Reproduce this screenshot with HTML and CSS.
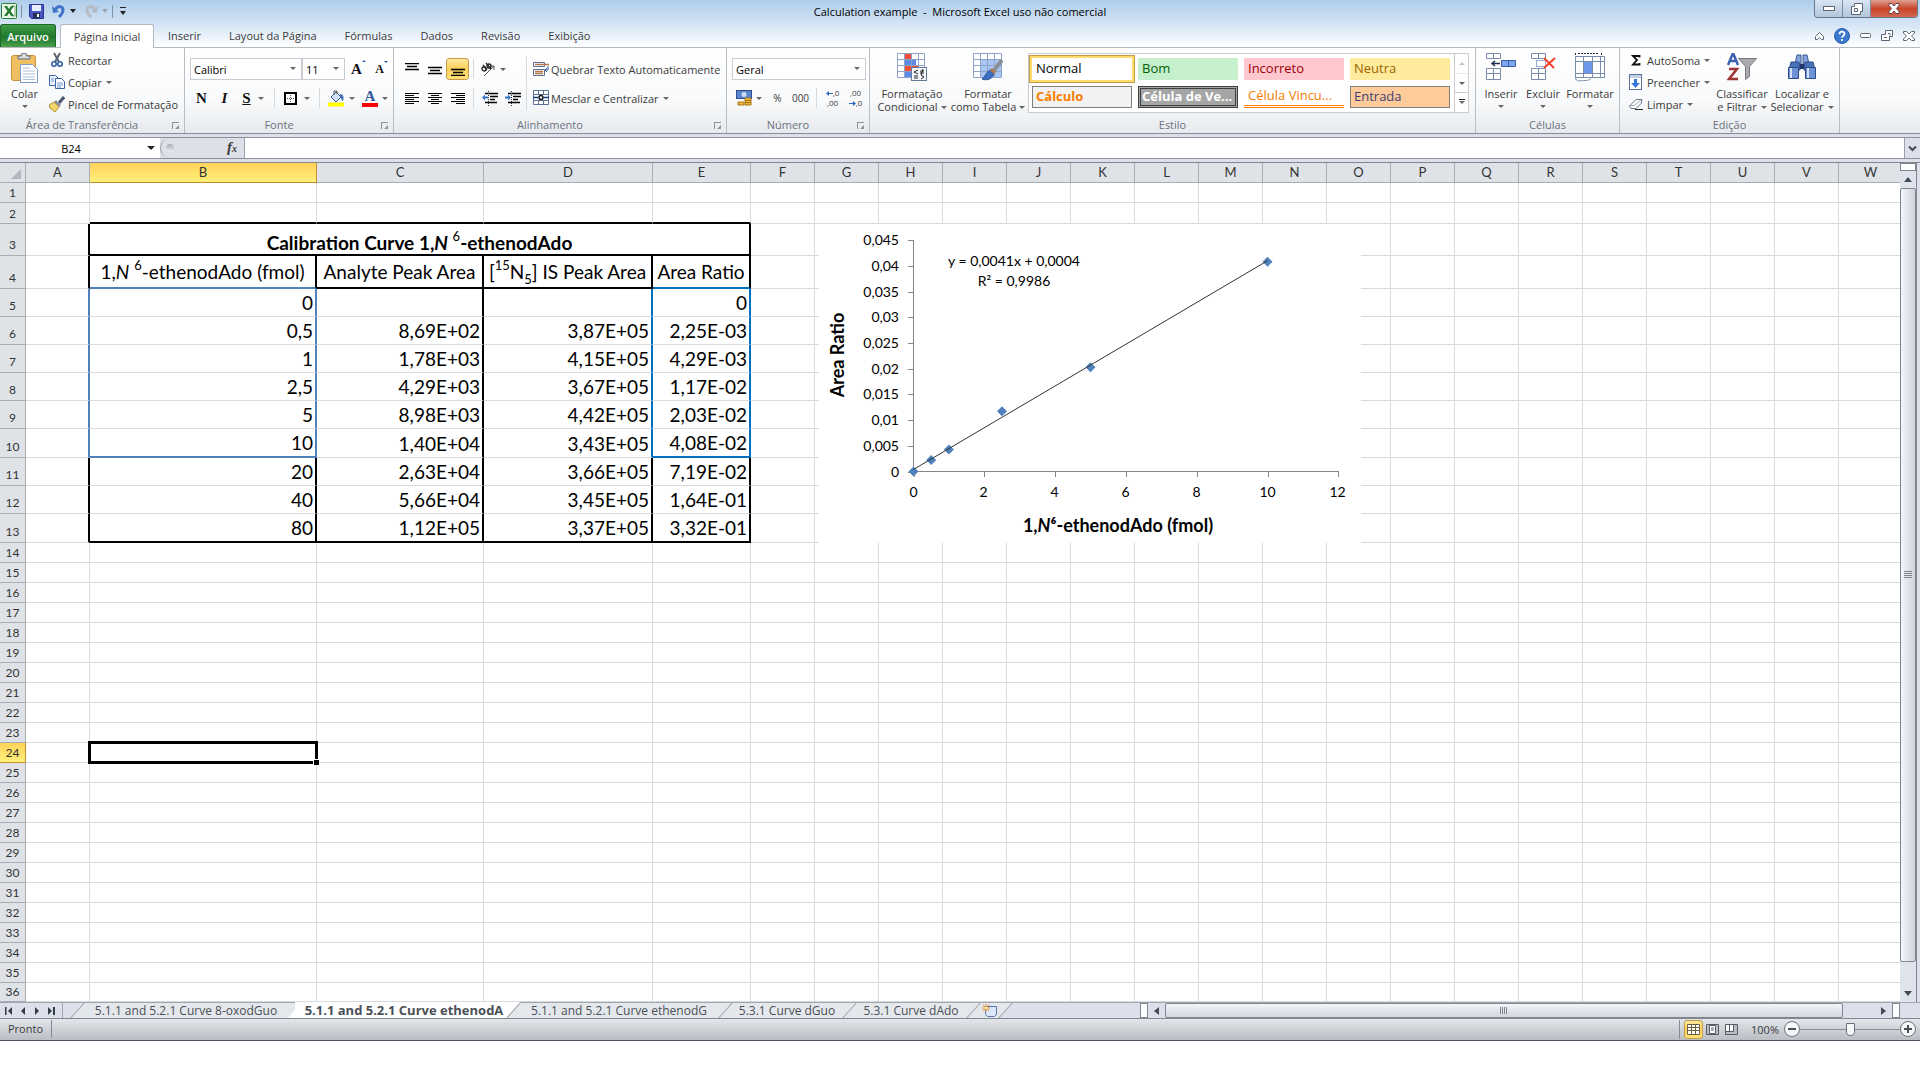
FILE: index.html
```
<!DOCTYPE html>
<html lang="pt">
<head>
  <meta charset="UTF-8">
  <meta name="viewport" content="width=device-width, initial-scale=1.0">
  <title>Calculation example - Microsoft Excel</title>
  <link rel="stylesheet" href="styles.css">
</head>
<body>
  <div class="window">
    <!-- Title bar -->
    <header class="top">
      <div class="title-bar">
        <div class="quick">
          <svg width="16" height="16" viewBox="0 0 16 16"><rect x=".5" y=".5" width="15" height="15" rx="1" fill="#e9f5e8" stroke="#2a7d35"/><path d="M11 3h3v10h-3" fill="#fff" stroke="#6fae6f"/><path d="M3 3h3l2 3 2-3h3L9.500 8l3.500 5h-3l-2-3-2 3H3l3.500-5z" fill="#237a31"/></svg>
          <i class="bar"></i>
          <button aria-label="Salvar"><svg width="15" height="15" viewBox="0 0 15 15"><path d="M.5.5h14v14h-12l-2-2z" fill="#4a57c4" stroke="#2b3591"/><path d="M3 1h9v6H3z" fill="#e8eefb"/><path d="M4 9h7v5H4z" fill="#2a2f55"/><path d="M8 10h2v3H8z" fill="#fff"/></svg></button>
          <button class="undo" aria-label="Desfazer"><svg width="14" height="14" viewBox="0 0 14 14"><path d="M3 6c3-5 8-4 8 0 0 3-2 5-4 7" fill="none" stroke="#3f74c9" stroke-width="3"/><path d="M0 2l1 7 6-1z" fill="#3f74c9"/></svg><i class="caret dark"></i></button>
          <button class="redo" aria-label="Refazer"><svg width="14" height="14" viewBox="0 0 14 14"><path d="M11 6C8 1 3 2 3 6c0 3 2 5 4 7" fill="none" stroke="#b3bac2" stroke-width="3"/><path d="M14 2l-1 7-6-1z" fill="#b3bac2"/></svg><i class="caret"></i></button>
          <i class="bar"></i>
          <button class="more" aria-label="Personalizar"><i class="caret dark"></i></button>
        </div>
        <h1>Calculation example &nbsp;-&nbsp; Microsoft Excel uso não comercial</h1>
        <div class="win-buttons">
          <button aria-label="Minimizar"><svg width="12" height="6" viewBox="0 0 12 6"><rect x=".5" y=".5" width="11" height="4" fill="#fff" stroke="#5b6673"/></svg></button>
          <button aria-label="Restaurar"><svg width="12" height="12" viewBox="0 0 12 12"><path d="M3.500.5h8v8h-2v3h-9v-8h3z" fill="#fff" stroke="#5b6673"/><path d="M3.500 5.500h3v3h-3z" fill="none" stroke="#5b6673"/></svg></button>
          <button class="close" aria-label="Fechar"><svg width="12" height="11" viewBox="0 0 12 11"><path d="M1 .5h3l2 2.500L8 .5h3v2L8.500 5.500 11 8.500v2H8L6 8l-2 2.500H1v-2l2.500-3L1 2.500z" fill="#fff" stroke="#6e4545"/></svg></button>
        </div>
      </div>
      <nav class="tabs">
        <button class="file">Arquivo</button>
        <button class="active">Página Inicial</button>
        <button>Inserir</button>
        <button>Layout da Página</button>
        <button>Fórmulas</button>
        <button>Dados</button>
        <button>Revisão</button>
        <button>Exibição</button>
        <div class="tab-tools">
          <button aria-label="Minimizar faixa"><svg width="9" height="8" viewBox="0 0 9 8"><path d="M.5 4.500l4-4 4 4v3h-2l-2-2-2 2h-2z" fill="#fff" stroke="#5b6673"/></svg></button>
          <button aria-label="Ajuda"><svg width="16" height="16" viewBox="0 0 16 16"><circle cx="8" cy="8" r="7.500" fill="#3d78cf" stroke="#2c5ca8"/><path d="M5.500 6.300c0-3.500 5-3.300 5-.3 0 1.800-2.500 1.800-2.500 3.800" fill="none" stroke="#fff" stroke-width="1.800"/><circle cx="8" cy="12" r="1.100" fill="#fff"/></svg></button>
          <button aria-label="Minimizar pasta"><svg width="11" height="5" viewBox="0 0 11 5"><rect x=".5" y=".5" width="10" height="4" rx="1" fill="#fff" stroke="#5b6673"/></svg></button>
          <button aria-label="Restaurar pasta"><svg width="12" height="11" viewBox="0 0 12 11"><path d="M4.500.5h7v6h-3v4h-8v-6h4z" fill="#fff" stroke="#5b6673"/><path d="M3 7.500h3M7 3.500h2v2" fill="none" stroke="#5b6673"/></svg></button>
          <button aria-label="Fechar pasta"><svg width="12" height="10" viewBox="0 0 12 10"><path d="M.5.5h3L6 3 8.500.5h3v1.500L8.500 5l3 3v1.500h-3L6 7 3.500 9.500h-3V8l3-3-3-3z" fill="#fff" stroke="#5b6673"/></svg></button>
        </div>
      </nav>
    </header>

    <!-- Ribbon -->
    <section class="ribbon">
      <div class="group g-clip">
        <div class="tools">
          <button class="big"><svg width="28" height="30" viewBox="0 0 28 30"><rect x=".5" y="2.500" width="24" height="25" rx="2" fill="#f0bf62" stroke="#c99335"/><path d="M7 5V3h3a3 3 0 0 1 6 0h3v3H7z" fill="#d8dadd" stroke="#666b73"/><path d="M9.500 11.500h12l5 5v13h-17z" fill="#fff" stroke="#7d9cc9"/><path d="M12 15h7M12 18h12M12 21h12M12 24h12M12 26.500h12" stroke="#a9bedd"/></svg><span>Colar</span><i class="caret"></i></button>
          <div class="stack">
            <button><svg width="16" height="16" viewBox="0 0 16 16"><path d="M5 1l5 9M11 1L6 10" stroke="#5a6472" stroke-width="2"/><circle cx="5" cy="12" r="2.200" fill="none" stroke="#2f5fa8" stroke-width="1.600"/><circle cx="11" cy="12" r="2.200" fill="none" stroke="#2f5fa8" stroke-width="1.600"/></svg>Recortar</button>
            <button><svg width="16" height="16" viewBox="0 0 16 16"><path d="M.5 1.500h6l3 3v7h-9z" fill="#eef4fd" stroke="#3d62a8"/><path d="M6.500 4.500h6l3 3v7h-9z" fill="#fff" stroke="#3d62a8"/><path d="M2 5h3M2 7h3M8 9h6M8 11h6M8 13h4" stroke="#6f95d2"/></svg>Copiar<i class="caret"></i></button>
            <button><svg width="16" height="16" viewBox="0 0 16 16"><path d="M15 1l-5 6" stroke="#4b566d" stroke-width="3"/><path d="M7 4l5 5-2 2-5-5z" fill="#8d94a3"/><path d="M5 6l5 5-4 5-5-4-1-3z" fill="#f3d66a" stroke="#b59237"/></svg>Pincel de Formatação</button>
          </div>
        </div>
        <h2>Área de Transferência</h2><i class="launch"></i>
      </div>

      <div class="group g-font">
        <div class="tools rows">
          <div class="row">
            <span class="drop w-font"><select aria-label="Fonte"><option>Calibri</option></select></span>
            <span class="drop w-size"><select aria-label="Tamanho"><option>11</option></select></span>
            <button class="t23" aria-label="Aumentar fonte"><b class="serif">A</b><i class="up"></i></button>
            <button class="t23" aria-label="Diminuir fonte"><b class="serif small">A</b><i class="down"></i></button>
          </div>
          <div class="row">
            <button class="t23"><b class="serif">N</b></button>
            <button class="t23"><b class="serif"><em>I</em></b></button>
            <button class="t36"><b class="serif"><u>S</u></b><i class="caret"></i></button>
            <i class="sep"></i>
            <button class="t43" aria-label="Bordas"><svg width="13" height="13" viewBox="0 0 13 13"><rect x="1" y="1" width="11" height="11" fill="#fff" stroke="#000" stroke-width="2"/><path d="M6.500 3v7M3 6.500h7" stroke="#555" stroke-dasharray="1 1"/></svg><i class="caret"></i></button>
            <i class="sep"></i>
            <button class="t36" aria-label="Preenchimento"><svg width="17" height="17" viewBox="0 0 17 17"><path d="M3 7l5-5 5 5-5 5z" fill="#cfe0f7" stroke="#3a5a94"/><path d="M6 5V1h3v3" fill="none" stroke="#555"/><path d="M12 4c4 0 4 4 3 7-2 0-1-3-3-4z" fill="#3f6fb8"/><path d="M0 12.500h16v4H0z" fill="#ff0"/></svg><i class="caret"></i></button>
            <button class="t36" aria-label="Cor da fonte"><span class="font-color serif">A</span><i class="caret"></i></button>
          </div>
        </div>
        <h2>Fonte</h2><i class="launch"></i>
      </div>

      <div class="group g-align">
        <div class="tools">
          <div class="rows">
            <div class="row">
              <button class="t23" aria-label="Alinhar acima"><svg width="14" height="13" viewBox="0 0 14 13"><path d="M0 .500h14M2 3.500h10M0 6.500h14" stroke="#000" stroke-width="1.300"/></svg></button>
              <button class="t23" aria-label="Alinhar no meio"><svg width="14" height="13" viewBox="0 0 14 13"><path d="M0 4.500h14M2 7.500h10M0 10.500h14" stroke="#000" stroke-width="1.300"/></svg></button>
              <button class="t23 on" aria-label="Alinhar abaixo"><svg width="14" height="13" viewBox="0 0 14 13"><path d="M0 6.500h14M2 9.500h10M0 12.500h14" stroke="#000" stroke-width="1.300"/></svg></button>
              <i class="sep"></i>
              <button class="t30" aria-label="Orientação"><svg width="16" height="15" viewBox="0 0 16 15"><path d="M4 14L14 4M10 4h4v4" fill="none" stroke="#555"/><circle cx="4" cy="7" r="2" fill="none" stroke="#222" stroke-width="1.300"/><path d="M3 3l4 5M6 1l5 6" stroke="#222" stroke-width="1.300"/><circle cx="9" cy="4" r="2" fill="none" stroke="#222" stroke-width="1.300"/></svg><i class="caret"></i></button>
            </div>
            <div class="row">
              <button class="t23" aria-label="Esquerda"><svg width="14" height="13" viewBox="0 0 14 13"><path d="M0 1.500h14M0 3.500h9M0 5.500h14M0 7.500h9M0 9.500h14M0 11.500h9" stroke="#000"/></svg></button>
              <button class="t23" aria-label="Centro"><svg width="14" height="13" viewBox="0 0 14 13"><path d="M0 1.500h14M3 3.500h8M0 5.500h14M3 7.500h8M0 9.500h14M3 11.500h8" stroke="#000"/></svg></button>
              <button class="t23" aria-label="Direita"><svg width="14" height="13" viewBox="0 0 14 13"><path d="M0 1.500h14M5 3.500h9M0 5.500h14M5 7.500h9M0 9.500h14M5 11.500h9" stroke="#000"/></svg></button>
              <i class="sep"></i>
              <button class="t23" aria-label="Diminuir recuo"><svg width="16" height="15" viewBox="0 0 16 15"><path d="M3 2.500h13M8 5.500h8M8 8.500h5M3 11.500h12" stroke="#000" stroke-width="1.500"/><path d="M6.500 0v15" stroke="#333" stroke-dasharray="1 1"/><path d="M0 6.500l3-3v2h3v2H3v2z" fill="#3b74cd"/></svg></button>
              <button class="t23" aria-label="Aumentar recuo"><svg width="16" height="15" viewBox="0 0 16 15"><path d="M3 2.500h13M8 5.500h8M8 8.500h5M3 11.500h12" stroke="#000" stroke-width="1.500"/><path d="M6.500 0v15" stroke="#333" stroke-dasharray="1 1"/><path d="M6 6.500l-3-3v2H0v2h3v2z" fill="#3b74cd"/></svg></button>
            </div>
          </div>
          <i class="sep tall"></i>
          <div class="rows">
            <div class="row"><button class="label"><svg width="16" height="16" viewBox="0 0 16 16"><path d="M.5 1.500h11v4H.5zM.5 8.500h11v6H.5z" fill="#fff" stroke="#5b6f92"/><path d="M2 3.500h14M2 10.500h8M2 12.500h8" stroke="#b5774a" stroke-width="1.300"/><path d="M15 5v4h-2M14 7l-2 2 2 2" fill="none" stroke="#3b5f9d"/></svg>Quebrar Texto Automaticamente</button></div>
            <div class="row"><button class="label"><svg width="16" height="16" viewBox="0 0 16 16"><path d="M.5.5h15v14H.5zM.5 4.500h15M.5 10.500h15M5.500.5v4M10.500.5v4M5.500 10.500v4M10.500 10.500v4" fill="#fff" stroke="#5b7297"/><path d="M0 7.500h5M11 7.500h5" stroke="#123a7c" stroke-width="1.500"/><circle cx="8" cy="7.500" r="2" fill="none" stroke="#111" stroke-width="1.500"/></svg>Mesclar e Centralizar<i class="caret"></i></button></div>
          </div>
        </div>
        <h2>Alinhamento</h2><i class="launch"></i>
      </div>

      <div class="group g-num">
        <div class="tools rows">
          <div class="row"><span class="drop w-num"><select aria-label="Formato de número"><option>Geral</option></select></span></div>
          <div class="row">
            <button class="t36" aria-label="Moeda"><svg width="16" height="16" viewBox="0 0 16 16"><rect x=".5" y=".5" width="15" height="8" fill="#5a86cf" stroke="#2c4f8f"/><circle cx="8" cy="4.500" r="2.500" fill="#c9dbf5"/><path d="M9 8h6v7H9zM2 12h6v3H2z" fill="#f2b83e" stroke="#a87416"/><path d="M9 10.500h6M9 12.500h6" stroke="#a87416"/></svg><i class="caret"></i></button>
            <button class="t23 num">%</button>
            <button class="t23 num">000</button>
            <i class="sep"></i>
            <button class="t23 decimals" aria-label="Mais casas"><span><svg width="7" height="5" viewBox="0 0 7 5"><path d="M0 2.500L3 0v2h4v1H3v2z" fill="#2d66c4"/></svg>,0</span><span>,00</span></button>
            <button class="t23 decimals" aria-label="Menos casas"><span>,00</span><span><svg width="7" height="5" viewBox="0 0 7 5"><path d="M7 2.500L4 0v2H0v1h4v2z" fill="#2d66c4"/></svg>,0</span></button>
          </div>
        </div>
        <h2>Número</h2><i class="launch"></i>
      </div>

      <div class="group g-style">
        <div class="tools">
          <button class="big"><svg width="30" height="30" viewBox="0 0 30 30"><path d="M.5.5h27v24H.5z" fill="#fff"/><path d="M7 0h7v6H7zM7 13h14v6H7z" fill="#f04c36"/><path d="M7 7h12v6H7zM7 19h7v6H7z" fill="#5c8be6"/><path d="M.5.500h27v24H.5zM.5 6.500h27M.5 12.500h27M.5 18.500h27M7.500.500v24M14.500.500v24M21.500.500v24" fill="none" stroke="#8ea3c8"/><rect x="14.500" y="14.500" width="15" height="13" fill="#f4f7fc" stroke="#66789a"/><path d="M21 17l-4 2 4 2M17 23h4M17 25h4M23 18h4M23 20h4M26 16l-2 6M24 22l3 2-3 2" fill="none" stroke="#222"/></svg><span>Formatação<br>Condicional<i class="caret"></i></span></button>
          <button class="big"><svg width="30" height="30" viewBox="0 0 30 30"><path d="M.5.5h28v24H.5z" fill="#fff"/><path d="M7 7h21v18H7z" fill="#a8c6f5"/><path d="M.5.500h28v24H.5zM.5 6.500h28M.5 12.500h28M.5 18.500h28M7.500.500v24M14.500.500v24M21.500.500v24" fill="none" stroke="#8ea3c8"/><path d="M29 7l-9 12" stroke="#8c8f96" stroke-width="4"/><path d="M21 20l-3-3c-4 0-5 6-9 9 5 2 11 0 12-6z" fill="#3c6fc1" stroke="#294f90"/><path d="M22 20l-4-4" stroke="#b5774a" stroke-width="3"/></svg><span>Formatar<br>como Tabela<i class="caret"></i></span></button>
          <div class="gallery">
            <div class="styles">
              <button class="s-normal">Normal</button>
              <button class="s-bom">Bom</button>
              <button class="s-inc">Incorreto</button>
              <button class="s-neu">Neutra</button>
              <button class="s-calc">Cálculo</button>
              <button class="s-ver">Célula de Ve...</button>
              <button class="s-vin">Célula Vincu...</button>
              <button class="s-ent">Entrada</button>
            </div>
            <div class="scroller">
              <button class="off" aria-label="Acima"><i class="caret flip"></i></button>
              <button aria-label="Abaixo"><i class="caret"></i></button>
              <button class="more" aria-label="Mais"><i class="caret"></i></button>
            </div>
          </div>
        </div>
        <h2>Estilo</h2>
      </div>

      <div class="group g-cells">
        <div class="tools">
          <button class="big"><svg width="30" height="30" viewBox="0 0 30 30"><path d="M.5.500h14v5H.5zM7.500.500v5M.5 15.500h14v11H.5zM7.500 15.500v11M.5 20.500h14" fill="#fff" stroke="#7a8bab"/><path d="M15.500 7.500h14v6h-14zM22.500 7.500v6" fill="#7ea6ee" stroke="#3a5fa8"/><path d="M6 10.500h8M9 8l-3 2.500L9 13" fill="none" stroke="#1d3154" stroke-width="1.500"/></svg><span>Inserir</span><i class="caret"></i></button>
          <button class="big"><svg width="30" height="30" viewBox="0 0 30 30"><path d="M3.500.500h14v5h-14zM10.500.500v5M3.500 15.500h14v11h-14zM10.500 15.500v11M3.500 20.500h14" fill="#fff" stroke="#7a8bab"/><path d="M8.500 7.500h9v6h-9z" fill="none" stroke="#2f59ad" stroke-dasharray="1 1"/><path d="M16 5l10 10M27 5L16 15" stroke="#f0412a" stroke-width="2"/></svg><span>Excluir</span><i class="caret"></i></button>
          <button class="big"><svg width="32" height="30" viewBox="0 0 32 30"><path d="M1.500 3.500h29v21h-29zM1.500 8.500h29M1.500 20.500h29M9.500 3.500v21M18.500 3.500v21M26.500 3.500v21M1.500 24.500c0 5 6 3 8 3 4 0 6 0 8-3" fill="#fff" stroke="#7a8bab"/><path d="M10 9h8v11h-8z" fill="#6c97ea"/><path d="M1.500 0v3M27.500 0v3M4 .500h21" stroke="#1d3154" stroke-dasharray="2 1"/></svg><span>Formatar</span><i class="caret"></i></button>
        </div>
        <h2>Células</h2>
      </div>

      <div class="group g-edit">
        <div class="tools">
          <div class="stack">
            <button><svg width="14" height="14" viewBox="0 0 14 14"><path d="M10.500 4.500V3H4l4 4-4 4.500h6.500V10" fill="none" stroke="#111" stroke-width="1.800"/></svg>AutoSoma<i class="caret"></i></button>
            <button><svg width="14" height="16" viewBox="0 0 14 16"><rect x=".5" y=".5" width="12" height="15" fill="#fff" stroke="#5b7297"/><path d="M1 1h11v3H1z" fill="#c3d2ea"/><path d="M5 5h3v4h3l-4.500 5L2 9h3z" fill="#3d78e0"/></svg>Preencher<i class="caret"></i></button>
            <button><svg width="14" height="14" viewBox="0 0 14 14"><path d="M7 2.500h6l-1 4-5 5H2L.5 9z" fill="#fdfdfe" stroke="#6b7488"/><path d="M.5 8.500h5l6-5" fill="none" stroke="#9ba5b8"/><path d="M6 12.500h8" stroke="#222"/></svg>Limpar<i class="caret"></i></button>
          </div>
          <button class="big"><svg width="30" height="30" viewBox="0 0 30 30"><path d="M1 12L6 0l5 12M3 8h6" fill="none" stroke="#3b62b0" stroke-width="2.500"/><path d="M2 16h8L2 26h9" fill="none" stroke="#9c3434" stroke-width="2.500"/><path d="M11.500 5.500h18l-7 8v10l-4 3v-13z" fill="#a9abae" stroke="#77797d"/></svg><span>Classificar<br>e Filtrar<i class="caret"></i></span></button>
          <button class="big"><svg width="28" height="30" viewBox="0 0 28 30"><path d="M9 2h4v9H7zM15 2h4l2 9h-6z" fill="#86a5dc" stroke="#3a568f"/><path d="M3 9h8l1 8H1zM17 9h8l2 8H16z" fill="#4a72bd" stroke="#2d4a84"/><path d="M.5 14.500h10v11H.5zM17.500 14.500h10v11h-10z" fill="#6d92d6" stroke="#2d4a84"/><path d="M3 15v10M20 15v10" stroke="#d4e2f9" stroke-width="2"/><path d="M12 11h4v5h-4z" fill="#1f386b"/></svg><span>Localizar e<br>Selecionar<i class="caret"></i></span></button>
        </div>
        <h2>Edição</h2>
      </div>
    </section>

    <!-- Formula bar -->
    <div class="formula">
      <input class="name-box" value="B24" aria-label="Caixa de nome">
      <button class="name-drop" aria-label="Nomes"><i class="caret dark"></i></button>
      <div class="fx"><i class="knob"></i><button class="serif"><em>f<small>x</small></em></button></div>
      <input class="formula-input" aria-label="Fórmula">
      <button class="expand" aria-label="Expandir"><svg width="9" height="7" viewBox="0 0 9 7"><path d="M1 1.500l3.500 3.500L8 1.500" fill="none" stroke="#444b55" stroke-width="2"/></svg></button>
    </div>

    <!-- Worksheet -->
    <main class="work">
      <div class="sheet">
        <table class="grid" id="grid"></table>
        <svg class="chart" id="chart" width="542" height="319" viewBox="0 0 542 319">
          <text x="195" y="42" text-anchor="middle">y = 0,0041x + 0,0004</text>
          <text x="195" y="62" text-anchor="middle">R² = 0,9986</text>
          <text class="axis-title" transform="translate(25 131) rotate(-90)" text-anchor="middle">Area Ratio</text>
          <text class="axis-title" x="299" y="308" text-anchor="middle">1,<tspan font-style="italic">N</tspan>⁶-ethenodAdo (fmol)</text>
        </svg>
      </div>
      <div class="vscroll">
        <i class="split"></i>
        <button aria-label="Rolar acima"><i class="tri up"></i></button>
        <div class="thumb"><i></i></div>
        <button class="last" aria-label="Rolar abaixo"><i class="tri down"></i></button>
      </div>
    </main>

    <!-- Sheet tabs -->
    <div class="sheet-bar">
      <div class="sheet-nav">
        <button aria-label="Primeira"><svg width="8" height="8" viewBox="0 0 8 8"><path d="M.5 0v8" stroke="#333b47" stroke-width="2"/><path d="M7 0v8L3 4z" fill="#333b47"/></svg></button>
        <button aria-label="Anterior"><svg width="8" height="8" viewBox="0 0 8 8"><path d="M6 0v8L2 4z" fill="#333b47"/></svg></button>
        <button aria-label="Próxima"><svg width="8" height="8" viewBox="0 0 8 8"><path d="M2 0v8l4-4z" fill="#333b47"/></svg></button>
        <button aria-label="Última"><svg width="8" height="8" viewBox="0 0 8 8"><path d="M7 0v8" stroke="#333b47" stroke-width="2"/><path d="M1 0v8l4-4z" fill="#333b47"/></svg></button>
      </div>
      <div class="sheet-tabs">
        <button class="long">5.1.1 and 5.2.1 Curve 8-oxodGuo</button>
        <button class="long active">5.1.1 and 5.2.1 Curve ethenodA</button>
        <button class="medium">5.1.1 and 5.2.1 Curve ethenodG</button>
        <button class="short">5.3.1 Curve dGuo</button>
        <button class="short">5.3.1 Curve dAdo</button>
        <button class="new" aria-label="Nova planilha"><svg width="15" height="13" viewBox="0 0 15 13"><path d="M3.500 2.500h11v8l-2 2h-7l-2-2z" fill="#dbe8fb" stroke="#5b76a8"/><path d="M4 0v8M0 4h8M1 1l6 6M7 1L1 7" stroke="#e08a1e"/><circle cx="4" cy="4" r="1.500" fill="#fff3b0"/></svg></button>
      </div>
      <div class="hscroll">
        <i class="split"></i>
        <button aria-label="Rolar à esquerda"><i class="tri left"></i></button>
        <div class="track"><div class="thumb"><i></i></div></div>
        <button aria-label="Rolar à direita"><i class="tri right"></i></button>
        <i class="split"></i>
      </div>
      <i class="corner"></i>
    </div>

    <!-- Status bar -->
    <footer class="status">
      <span class="ready">Pronto</span>
      <div class="views">
        <button class="on" aria-label="Normal"><svg width="13" height="11" viewBox="0 0 13 11"><path d="M.5.500h12v10H.5zM.5 3.500h12M.5 6.500h12M4.500.500v10M8.500.500v10" fill="#fff" stroke="#6b6140"/></svg></button>
        <button aria-label="Layout da página"><svg width="13" height="11" viewBox="0 0 13 11"><path d="M.5.500h12v10H.5z" fill="#b9bdc4" stroke="#565c66"/><path d="M3.500 1.500h6v8h-6z" fill="#fff" stroke="#565c66"/><path d="M5 4h3M5 6h3" stroke="#565c66"/></svg></button>
        <button aria-label="Quebra de página"><svg width="13" height="11" viewBox="0 0 13 11"><path d="M.5.500h12v10H.5z" fill="#b9bdc4" stroke="#565c66"/><path d="M1 1h3v6H1zM5 1h3v6H5z" fill="#fff"/><path d="M4.500 1v6.500M8.500 1v6.500M1 7.500h8" stroke="#565c66"/></svg></button>
      </div>
      <span class="percent">100%</span>
      <button class="round" aria-label="Menos zoom"><svg width="16" height="16" viewBox="0 0 16 16"><circle cx="8" cy="8" r="7.500" fill="#f6f7f9" stroke="#6b727d"/><path d="M4 8h8" stroke="#4a4f57" stroke-width="2"/></svg></button>
      <input type="range" min="0" max="100" value="50" aria-label="Zoom">
      <button class="round" aria-label="Mais zoom"><svg width="16" height="16" viewBox="0 0 16 16"><circle cx="8" cy="8" r="7.500" fill="#f6f7f9" stroke="#6b727d"/><path d="M4 8h8M8 4v8" stroke="#4a4f57" stroke-width="2"/></svg></button>
    </footer>
  </div>

  <script src="script.js"></script>
</body>
</html>
```
FILE: styles.css
```
/* Reset and Base Styles */
* {
  margin: 0;
  padding: 0;
  box-sizing: border-box;
}

body {
  background: #fff;
  font-family: "Open Sans", "Noto Sans", sans-serif;
  font-size: 11px;
  line-height: 13px;
  color: #3b3b3b;
}

button,
select,
input {
  font: inherit;
  color: inherit;
  background: none;
  border: none;
  border-radius: 0;
  outline: none;
}

button {
  display: flex;
  align-items: center;
  white-space: nowrap;
}

svg {
  display: block;
  flex: none;
}

.window {
  background: #dde0ea;
}

.serif {
  font-family: "Liberation Serif", serif;
}

/* Small arrows */
.caret {
  display: inline-block;
  flex: none;
  width: 0;
  height: 0;
  border: 3px solid transparent;
  border-top-color: #666;
  border-bottom: none;
  margin-left: 4px;
  vertical-align: 2px;
}

.caret.dark {
  border-top-color: #222;
}

.caret.flip {
  transform: rotate(180deg);
}

/* Title bar and ribbon tabs */
.top {
  background: linear-gradient(#aecdea, #cfe1f4 45%, #fff);
  border-bottom: 1px solid #b5bac1;
}

.title-bar {
  display: grid;
  grid-template-columns: 1fr auto 1fr;
  height: 24px;
}

.title-bar h1 {
  font-size: 11px;
  line-height: 23px;
  font-weight: normal;
  color: #000;
}

.quick {
  display: flex;
  align-items: center;
  height: 22px;
  padding-left: 1px;
  gap: 4px;
}

.bar {
  width: 1px;
  height: 13px;
  background: #8292a5;
}

.quick .bar + button {
  margin-left: 3px;
}

.quick .caret {
  border-width: 4px 3px 0;
}

.undo,
.redo {
  margin-left: 4px;
}

.redo .caret {
  border-top-color: #9aa5b1;
}

.more {
  position: relative;
}

.quick .more {
  margin-left: 0;
}

.quick .more .caret {
  margin: 4px 0 0;
}

.more::before {
  content: "";
  position: absolute;
  top: 0;
  width: 6px;
  height: 1px;
  background: #222;
}

.win-buttons {
  justify-self: end;
  display: flex;
  height: 18px;
  margin-right: 2px;
  border: 1px solid #66758a;
  border-top: none;
  border-radius: 0 0 4px 4px;
  overflow: hidden;
}

.win-buttons button {
  width: 28px;
  justify-content: center;
  background: linear-gradient(#d9e5f2, #b3c6db);
  border-right: 1px solid #7c8ca0;
}

.win-buttons .close {
  width: 46px;
  background: linear-gradient(#e0a193, #c9442b 50%, #d1684f);
  border: none;
}

.tabs {
  display: flex;
  height: 23px;
}

.tabs > button {
  padding: 0 14px;
}

.tabs .file {
  width: 56px;
  padding: 0;
  margin-right: 4px;
  justify-content: center;
  color: #fff;
  font-weight: 600;
  background: linear-gradient(#3f9c48, #20772c 55%, #4ba04d);
  border: 1px solid #1d6a27;
  border-bottom: none;
  border-radius: 3px 3px 0 0;
}

.tabs .active {
  width: 94px;
  height: 24px;
  padding: 0;
  justify-content: center;
  background: #fff;
  border: 1px solid #b5bac1;
  border-bottom: none;
  border-radius: 3px 3px 0 0;
}

.tab-tools {
  display: flex;
  gap: 10px;
  margin-left: auto;
  padding-right: 5px;
}

/* Ribbon */
.ribbon {
  display: flex;
  height: 86px;
  background: linear-gradient(#fff, #f9fafb 60%, #e7eaee);
  border-bottom: 1px solid #888d96;
}

.group {
  position: relative;
  display: flex;
  flex-direction: column;
  flex: none;
  border-right: 1px solid #b9bec5;
}

.group h2 {
  height: 16px;
  font-size: 11px;
  line-height: 15px;
  font-weight: normal;
  text-align: center;
  color: #6b7280;
}

.g-clip {
  width: 185px;
}

.g-font {
  width: 209px;
}

.g-align {
  width: 333px;
}

.g-num {
  width: 143px;
}

.g-style {
  width: 606px;
}

.g-cells {
  width: 144px;
}

.g-edit {
  width: 220px;
}

.g-clip h2,
.g-align h2,
.g-font h2,
.g-num h2 {
  padding-right: 20px;
}

.tools {
  display: flex;
  height: 69px;
}

.launch {
  position: absolute;
  right: 5px;
  bottom: 4px;
  width: 7px;
  height: 7px;
  border: 1px solid #8d939c;
  border-right: none;
  border-bottom: none;
}

.launch::after {
  content: "";
  position: absolute;
  right: 0;
  bottom: 0;
  border: 2px solid #8d939c;
  border-top-color: transparent;
  border-left-color: transparent;
}

.big {
  flex-direction: column;
  padding-top: 5px;
  line-height: 13px;
  text-align: center;
}

.big svg {
  margin-bottom: 4px;
}

.big > .caret {
  margin: 5px 0 0;
}

.g-clip .big {
  width: 49px;
}

.stack {
  display: flex;
  flex-direction: column;
  padding-top: 1px;
}

.stack button {
  height: 22px;
}

.stack svg {
  margin-right: 3px;
}

.g-edit .stack {
  width: 92px;
  padding-left: 9px;
}

.g-edit .stack svg {
  margin-right: 4px;
}

.rows {
  display: flex;
  flex-direction: column;
  gap: 7px;
  padding-top: 10px;
}

.row {
  display: flex;
  align-items: center;
  height: 22px;
}

.g-font .rows,
.g-num .rows {
  padding-left: 5px;
}

.g-align .rows {
  padding-left: 6px;
}

.t23,
.t30,
.t36,
.t43 {
  flex: none;
  justify-content: center;
  height: 22px;
}

.t23 {
  width: 23px;
}

.t30 {
  width: 30px;
}

.t36 {
  width: 34px;
}

.t43 {
  width: 36px;
}

.t43 .caret,
.t36 .serif + .caret {
  margin-left: 7px;
}

.row .serif {
  font-size: 15px;
  color: #111;
}

.row .t23 .small {
  font-size: 12px;
}

.t23 .up,
.t23 .down {
  border: 2px solid transparent;
  align-self: flex-start;
}

.t23 .up {
  border-bottom-color: #2d5cab;
}

.t23 .down {
  border-top-color: #2d5cab;
  margin-top: 3px;
}

.row .font-color {
  width: 16px;
  height: 17px;
  line-height: 13px;
  border-bottom: 4px solid #f00;
  color: #33579b;
  font-weight: bold;
}

.row .font-color + .caret {
  margin-left: 4px;
}

.on {
  background: linear-gradient(#ffe9a0, #fbcf57 50%, #ffe27c);
  border: 1px solid #c49a45;
  border-radius: 3px;
}

.sep {
  flex: none;
  width: 1px;
  height: 20px;
  margin: 0 4px;
  background: #d5d8dc;
}

.sep.tall {
  height: 54px;
  margin: 8px 0 0 2px;
}

.drop {
  position: relative;
  height: 22px;
  border: 1px solid #c9cdd3;
  background: #fff;
}

.drop::after {
  content: "";
  position: absolute;
  right: 5px;
  top: 8px;
  border: 3px solid transparent;
  border-top-color: #666;
  border-bottom: none;
}

.drop select {
  width: 100%;
  height: 20px;
  padding-left: 3px;
  appearance: none;
  color: #000;
}

.w-font {
  width: 112px;
}

.w-size {
  width: 43px;
  margin-right: 2px;
}

.w-num {
  width: 134px;
}

.label svg {
  margin-right: 2px;
}

.t23.num {
  font-size: 10px;
}

.decimals {
  flex-direction: column;
  align-items: center;
  font-size: 8px;
  line-height: 10px;
}

.decimals span {
  display: flex;
  align-items: center;
  height: 10px;
}

/* Style gallery */
.g-style .big {
  width: 76px;
}

.g-style .big:first-child {
  margin-left: 4px;
}

.g-style .caret {
  margin-left: 3px;
}

.gallery {
  display: flex;
  width: 441px;
  height: 60px;
  margin: 5px 0 0 2px;
  border: 1px solid #c9cdd3;
  background: #fff;
}

.styles {
  display: grid;
  grid-template-columns: repeat(4, 100px);
  grid-template-rows: 22px 22px;
  gap: 6px;
  padding: 4px 3px;
  width: 425px;
  font-size: 13px;
}

.styles button {
  padding: 0 0 2px 4px;
}

.s-normal {
  color: #000;
  background: #fff;
  box-shadow: 0 0 0 2px #ffdb6d, 0 0 0 3px #c49a45;
}

.s-bom {
  background: #c6efce;
  color: #006100;
}

.s-inc {
  background: #ffc7ce;
  color: #9c0006;
}

.s-neu {
  background: #ffeb9c;
  color: #9c6500;
}

.styles .s-calc {
  background: #f2f2f2;
  color: #fa7d00;
  font-weight: bold;
  border: 1px solid #7f7f7f;
  padding-left: 3px;
}

.styles .s-ver {
  background: #a5a5a5;
  color: #fff;
  font-weight: bold;
  border: 3px double #3f3f3f;
  padding-left: 1px;
}

.styles .s-vin {
  color: #fa7d00;
  border-bottom: 3px double #ff8001;
  padding-bottom: 0;
}

.styles .s-ent {
  background: #ffcc99;
  color: #3f3f76;
  border: 1px solid #7f7f7f;
  padding-left: 3px;
}

.scroller {
  flex: 1;
  display: flex;
  flex-direction: column;
  border-left: 1px solid #c9cdd3;
}

.scroller button {
  flex: 1;
  justify-content: center;
  border-bottom: 1px solid #c9cdd3;
}

.scroller button:last-child {
  border: none;
}

.scroller .caret {
  margin: 0;
}

.scroller .more::before {
  top: 6px;
}

.scroller .off {
  opacity: 0.4;
}

.g-cells .big {
  width: 42px;
}

.g-cells .big:first-child {
  margin-left: 4px;
}

.g-cells .big:last-of-type {
  width: 52px;
}

.g-edit .big {
  width: 60px;
}

/* Formula bar */
.formula {
  display: flex;
  height: 22px;
  margin-top: 3px;
  border-top: 1px solid #8b919b;
  border-bottom: 1px solid #8b919b;
}

.name-box,
.name-drop,
.formula-input {
  background: #fff;
  color: #000;
}

.name-box {
  width: 142px;
  text-align: center;
}

.name-drop {
  width: 18px;
}

.name-drop .caret {
  margin-left: 5px;
  border-width: 4px 4px 0;
}

.fx {
  display: flex;
  width: 85px;
  justify-content: space-between;
  align-items: center;
  padding: 0 7px 0 5px;
  background: #dde1e7;
  border: 1px solid #9aa0aa;
  border-width: 0 1px;
  border-radius: 10px 0 0 10px;
}

.knob {
  width: 8px;
  height: 8px;
  border-radius: 4px;
  background: linear-gradient(#a9afb8, #eef0f2);
}

.fx .serif {
  font-size: 15px;
  font-weight: bold;
}

.fx small {
  font-size: 10px;
}

.formula-input {
  flex: 1;
  min-width: 0;
  padding: 0 4px;
}

.expand {
  width: 16px;
  justify-content: center;
  border-left: 1px solid #9aa0aa;
}

/* Worksheet */
.work {
  display: flex;
  margin-top: 3px;
  border-top: 1px solid #82878f;
}

.sheet {
  position: relative;
  flex: 1;
  min-width: 0;
  overflow: hidden;
  background: #fff;
}

.grid {
  width: 1903px;
  table-layout: fixed;
  border-collapse: separate;
  border-spacing: 0;
  font-family: Lato, sans-serif;
}

.grid th,
.grid td {
  border-right: 1px solid #d9dadc;
  border-bottom: 1px solid #d9dadc;
}

.grid th {
  border-color: #a8adb4;
  background: #dfe3e8;
  font-size: 13px;
  line-height: 15px;
  font-weight: normal;
  vertical-align: bottom;
  padding-bottom: 2px;
  color: #333;
}

.grid th.sel {
  background: linear-gradient(#ffd25a, #fff07a);
  border-color: #c28f2c;
}

.grid tr > th:first-child {
  font-size: 12px;
}

.grid tr.tall > th {
  padding-bottom: 3px;
}

.grid .all::after {
  content: "";
  display: block;
  width: 0;
  margin: 0 4px 1px auto;
  border: 5px solid #b3b8bf;
  border-top-color: transparent;
  border-left-color: transparent;
}

.grid td {
  font-size: 19px;
  line-height: 22px;
  text-align: right;
  vertical-align: bottom;
  padding: 0 2px 2px 0;
  white-space: nowrap;
  color: #000;
}

.grid td:empty {
  padding: 0;
}

.grid td.head {
  text-align: center;
  vertical-align: middle;
  padding: 0;
}

.grid td.title {
  font-weight: bold;
  vertical-align: bottom;
}

.grid sup,
.grid sub {
  font-size: 13px;
  line-height: 0;
}

.grid sup {
  vertical-align: 9px;
}

.grid td.title sup {
  font-weight: normal;
}

.grid .bk-r {
  border-right: 2px solid #000;
}

.grid .bk-b {
  border-bottom: 2px solid #000;
}

.grid .b1-r {
  border-right: 2px solid #4f81bd;
}

.grid .b1-b {
  border-bottom: 2px solid #4f81bd;
}

.grid .b2-r {
  border-right: 2px solid #0070c0;
}

.grid .b2-b {
  border-bottom: 2px solid #0070c0;
}

/* Selected cell */
.grid td.current {
  position: relative;
}

.current::before {
  content: "";
  position: absolute;
  inset: -2px;
  border: 3px solid #000;
}

.current::after {
  content: "";
  position: absolute;
  right: -3px;
  bottom: -3px;
  width: 5px;
  height: 5px;
  background: #000;
  border: 1px solid #fff;
  border-width: 1px 0 0 1px;
}

/* Chart floats over the cells */
.chart {
  position: absolute;
  left: 819px;
  top: 61px;
  background: #fff;
  font-family: Lato, sans-serif;
  font-size: 14px;
}

.chart .axis-title {
  font-size: 18px;
  font-weight: bold;
}

.chart .axis {
  fill: none;
  stroke: #868686;
}

.chart .trend {
  stroke: #333;
}

.chart .point {
  fill: #4f81bd;
}

/* Scroll bars */
.vscroll {
  display: flex;
  flex-direction: column;
  width: 17px;
  margin-right: 3px;
  border-right: 1px solid #82878f;
  background: #dfe4ec;
}

.vscroll button {
  height: 17px;
  justify-content: center;
}

.vscroll .split {
  height: 8px;
  border: 1px solid #82878f;
  background: #fff;
}

.vscroll .thumb {
  display: flex;
  align-items: center;
  justify-content: center;
  height: 774px;
  border: 1px solid #82878f;
  border-radius: 2px;
  background: linear-gradient(90deg, #f3f6fa, #cfd4dc);
}

.vscroll .thumb i {
  width: 8px;
  height: 8px;
  background: repeating-linear-gradient(#82878f 0 1px, transparent 1px 2px);
}

.vscroll .last {
  margin-top: auto;
}

.tri {
  border: 4px solid transparent;
}

.tri.up {
  border-bottom: 5px solid #444b55;
  border-top: none;
}

.tri.down {
  border-top: 5px solid #444b55;
  border-bottom: none;
}

.tri.left {
  border-right: 5px solid #444b55;
  border-left: none;
}

.tri.right {
  border-left: 5px solid #444b55;
  border-right: none;
}

/* Sheet tabs */
.sheet-bar {
  display: flex;
  height: 17px;
  border-top: 1px solid #a0a6b0;
  border-bottom: 1px solid #82878f;
}

.sheet-nav {
  display: flex;
  gap: 6px;
  width: 63px;
  padding-left: 5px;
  border-right: 1px solid #a0a6b0;
}

.sheet-tabs {
  display: flex;
  flex: 1;
  padding-left: 14px;
}

.sheet-tabs button {
  position: relative;
  isolation: isolate;
  justify-content: center;
  height: 15px;
  font-size: 12px;
  line-height: 13px;
  color: #4b4f56;
}

/* Slanted tab shape behind the label */
.sheet-tabs button::before {
  content: "";
  position: absolute;
  z-index: -1;
  inset: 0;
  background: #e4e8ec;
  border-left: 1px solid #8f959f;
  transform: skewX(-42deg);
}

.sheet-tabs .long {
  width: 218px;
}

.sheet-tabs .medium {
  width: 212px;
}

.sheet-tabs .short {
  width: 124px;
}

.sheet-tabs .active {
  height: 16px;
  margin-top: -1px;
  font-size: 13px;
  font-weight: bold;
  background: #fff;
}

.sheet-tabs .active::before {
  background: #fff;
  border: none;
}

.sheet-tabs .new {
  width: 33px;
}

.sheet-tabs .new::before {
  border-right: 1px solid #8f959f;
}

.hscroll {
  display: flex;
  width: 760px;
}

.hscroll .split {
  width: 8px;
  border: 1px solid #82878f;
  background: #fff;
}

.hscroll button {
  width: 17px;
  justify-content: center;
}

.hscroll .track {
  flex: 1;
}

.hscroll .thumb {
  display: flex;
  align-items: center;
  justify-content: center;
  width: 678px;
  height: 15px;
  border: 1px solid #82878f;
  border-radius: 2px;
  background: linear-gradient(#f1f4f9, #d3d8df);
}

.hscroll .thumb i {
  width: 8px;
  height: 7px;
  background: repeating-linear-gradient(90deg, #82878f 0 1px, transparent 1px 2px);
}

.corner {
  width: 20px;
}

/* Status bar */
.status {
  display: flex;
  align-items: center;
  height: 22px;
  padding: 0 4px 1px 0;
  background: linear-gradient(#e3e6ea, #b9bec4);
  border-bottom: 1px solid #4a5462;
}

.ready {
  width: 52px;
  padding-left: 8px;
  line-height: 18px;
  border-right: 1px solid #868c95;
}

.views {
  display: flex;
  margin-left: auto;
  padding-left: 4px;
  border-left: 1px solid #868c95;
}

.views button {
  width: 19px;
  height: 19px;
  justify-content: center;
}

.percent {
  width: 38px;
  margin-left: 5px;
  text-align: center;
}

.status input {
  width: 100px;
  height: 16px;
  appearance: none;
  background: linear-gradient(#8a9099, #8a9099) center / 100% 1px no-repeat;
}

.status input::-webkit-slider-thumb {
  appearance: none;
  width: 9px;
  height: 13px;
  background: #f6f7f9;
  border: 1px solid #6b727d;
  border-radius: 1px 1px 5px 5px;
}
```
FILE: script.js
```
// Column widths in pixels, row header first
const widths = [26, 64, 227, 167, 169, 98];
const letters = 'ABCDEFGHIJKLMNOPQRSTUVW'.split('');
while (widths.length <= letters.length) widths.push(64);

const heights = { 2: 21, 3: 32, 4: 33, 5: 28, 6: 28, 7: 28, 8: 28, 9: 28, 10: 29, 11: 28, 12: 28, 13: 29, 36: 19 };

const data = {
  4: ['1,<i>N</i> <sup>6</sup>-ethenodAdo (fmol)', 'Analyte Peak Area', '[<sup>15</sup>N<sub>5</sub>] IS Peak Area', 'Area Ratio'],
  5: ['0', '', '', '0'],
  6: ['0,5', '8,69E+02', '3,87E+05', '2,25E-03'],
  7: ['1', '1,78E+03', '4,15E+05', '4,29E-03'],
  8: ['2,5', '4,29E+03', '3,67E+05', '1,17E-02'],
  9: ['5', '8,98E+03', '4,42E+05', '2,03E-02'],
  10: ['10', '1,40E+04', '3,43E+05', '4,08E-02'],
  11: ['20', '2,63E+04', '3,66E+05', '7,19E-02'],
  12: ['40', '5,66E+04', '3,45E+05', '1,64E-01'],
  13: ['80', '1,12E+05', '3,37E+05', '3,32E-01']
};

// Border classes for a cell
function borders(row, col) {
  const list = [];
  const plotted = row >= 5 && row <= 10;
  if (row >= 3 && row <= 13) {
    if (col === 'A' || col === 'B') list.push(plotted ? 'b1-r' : 'bk-r');
    if (col === 'C') list.push('bk-r');
    if (col === 'D' || col === 'E') list.push(plotted ? 'b2-r' : 'bk-r');
  }
  if ('BCDE'.includes(col)) {
    if (row === 2 || row === 3 || row === 13) list.push('bk-b');
    if (row === 4 || row === 10) {
      if (col === 'B') list.push('b1-b');
      else if (col === 'E') list.push('b2-b');
      else if (row === 4) list.push('bk-b');
    }
  }
  return list;
}

function buildGrid() {
  let html = '<colgroup>' + widths.map(w => `<col style="width:${w}px">`).join('') + '</colgroup>';
  html += '<tr style="height:20px"><th class="all"></th>' + letters.map(l => `<th class="${l === 'B' ? 'sel' : ''}">${l}</th>`).join('') + '</tr>';
  for (let r = 1; r <= 36; r++) {
    html += `<tr class="${heights[r] > 22 ? 'tall' : ''}" style="height:${heights[r] || 20}px"><th class="${r === 24 ? 'sel' : ''}">${r}</th>`;
    letters.forEach((col, i) => {
      if (r === 3 && 'CDE'.includes(col)) return;
      const list = borders(r, col);
      let text = '';
      let span = '';
      if (r === 3 && col === 'B') {
        text = 'Calibration Curve 1,<i>N</i> <sup>6</sup>-ethenodAdo';
        span = ' colspan="4"';
        list.push('head', 'title');
      } else if (data[r] && i >= 1 && i <= 4) {
        text = data[r][i - 1];
        if (r === 4) list.push('head');
      }
      if (r === 24 && col === 'B') list.push('current');
      html += `<td class="${list.join(' ')}"${span}>${text}</td>`;
    });
    html += '</tr>';
  }
  document.getElementById('grid').innerHTML = html;
}

// Scatter chart
function buildChart() {
  const x = v => 94.5 + v * 35.4;
  const y = v => 247.5 - v * 5140;
  let axis = `M94.5 16V247.5H520`;
  let html = '';
  for (let i = 0; i <= 9; i++) {
    const py = Math.round(y(i * 0.005)) + 0.5;
    axis += `M89 ${py}H94`;
    html += `<text x="80" y="${py + 4}" text-anchor="end">${String(i * 5 / 1000).replace('.', ',')}</text>`;
  }
  for (let v = 0; v <= 12; v += 2) {
    const px = Math.round(x(v)) + 0.5;
    axis += `M${px} 247V253`;
    html += `<text x="${px - 1}" y="273" text-anchor="middle">${v}</text>`;
  }
  html += `<path class="axis" d="${axis}"/>`;
  [[0, 0], [0.5, 0.00225], [1, 0.00429], [2.5, 0.0117], [5, 0.0203], [10, 0.0408]].forEach(p => {
    html += `<path class="point" d="M${x(p[0])} ${y(p[1]) - 5}l5 5-5 5-5-5z"/>`;
  });
  html += `<line class="trend" x1="${x(0)}" y1="${y(0.0004)}" x2="${x(10)}" y2="${y(0.041)}"/>`;
  document.getElementById('chart').insertAdjacentHTML('beforeend', html);
}

buildGrid();
buildChart();
```
